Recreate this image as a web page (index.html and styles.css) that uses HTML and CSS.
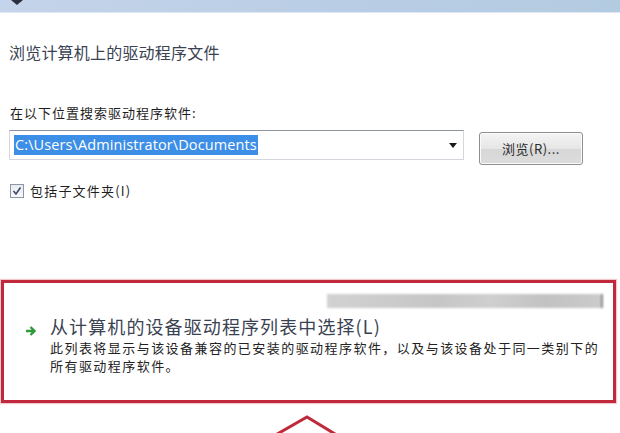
FILE: index.html
```html
<!DOCTYPE html>
<html lang="zh-CN">

<head>
    <meta charset="UTF-8">
    <meta name="viewport" content="width=device-width, initial-scale=1.0">
    <title>更新驱动程序软件</title>
    <link rel="stylesheet" href="styles.css">
</head>

<body>
    <div class="titlebar">
        <svg class="titlebar-icon" width="14" height="6" viewBox="0 0 14 6">
            <path d="M1 0 L7 5 L13 0 Z" fill="#2a3040" />
        </svg>
    </div>

    <main class="page">
        <h1 class="heading">浏览计算机上的驱动程序文件</h1>

        <div class="search">
            <label class="search-label">在以下位置搜索驱动程序软件:</label>
            <div class="search-row">
                <div class="combo">
                    <span class="combo-value">C:\Users\Administrator\Documents</span>
                    <span class="combo-arrow"></span>
                </div>
                <button class="browse">浏览(R)...</button>
            </div>
            <label class="check">
                <span class="check-box">
                    <svg width="10" height="10" viewBox="0 0 10 10">
                        <path d="M1.5 5 L4 8 L8.5 1.5" fill="none" stroke="#3b4a6b" stroke-width="1.6" />
                    </svg>
                </span>
                包括子文件夹(I)
            </label>
        </div>
    </main>

    <section class="pick">
        <div class="pick-blur"></div>
        <div class="pick-row">
            <svg class="pick-arrow" width="12" height="12" viewBox="0 0 12 12">
                <path d="M1 6 H9 M5.5 2 L9.5 6 L5.5 10" fill="none" stroke="#2f9a3a" stroke-width="2.4" />
            </svg>
            <div class="pick-text">
                <div class="pick-title">从计算机的设备驱动程序列表中选择(L)</div>
                <p class="pick-desc">此列表将显示与该设备兼容的已安装的驱动程序软件，以及与该设备处于同一类别下的所有驱动程序软件。</p>
            </div>
        </div>
    </section>

    <svg class="chevron" width="620" height="31" viewBox="0 0 620 31">
        <path d="M272 34 L307 14 L340 34" fill="none" stroke="#c0293b" stroke-width="3" />
    </svg>
</body>

</html>
```

FILE: styles.css
```css
:root {
    --red: #c0293b;
    --heading-color: #3a4252;
    --text-color: #1e1e1e;
}

* {
    margin: 0;
    padding: 0;
    box-sizing: border-box;
}

body {
    width: 620px;
    height: 433px;
    overflow: hidden;
    background: #ffffff;
    color: var(--text-color);
    font-family: "Noto Sans CJK SC", "Liberation Sans", sans-serif;
}

.titlebar {
    height: 13px;
    background: linear-gradient(to right, #c4d4ea, #b8cde4 60%, #b3cbe0);
    border-bottom: 1px solid #dfe8f2;
    padding-left: 10px;
}

.titlebar-icon {
    display: block;
}

.page {
    padding: 29px 0 0 9px;
}

.heading {
    font-size: 16px;
    font-weight: 400;
    line-height: 20px;
    letter-spacing: 0.2px;
    color: var(--heading-color);
}

.search {
    margin-top: 42px;
}

.search-label {
    display: block;
    font-size: 13px;
    line-height: 17px;
    letter-spacing: 1px;
    padding-left: 1px;
}

.search-row {
    display: flex;
    align-items: flex-start;
    gap: 15px;
    margin-top: 9px;
}

.combo {
    width: 455px;
    height: 30px;
    display: flex;
    align-items: center;
    justify-content: space-between;
    padding: 0 6px 0 4px;
    border: 1px solid #d4d8de;
    border-top-color: #8e949c;
    background: #ffffff;
}

.combo-value {
    font-family: "Open Sans", "Liberation Sans", sans-serif;
    font-size: 14.5px;
    line-height: 20px;
    padding: 0 1px;
    color: #ffffff;
    background: #3d8ee6;
    letter-spacing: 0.1px;
}

.combo-arrow {
    width: 0;
    height: 0;
    border-left: 4px solid transparent;
    border-right: 4px solid transparent;
    border-top: 5px solid #1a1a1a;
}

.browse {
    width: 104px;
    height: 33px;
    margin-top: 2px;
    border: 1px solid #8f8f8f;
    border-radius: 3px;
    background: linear-gradient(#f4f4f4, #e6e6e6 50%, #d7d7d7 51%, #dcdcdc);
    box-shadow: inset 0 0 0 1px #fbfbfb;
    font-family: "Noto Sans CJK SC", sans-serif;
    font-size: 13px;
    color: #2a2a2a;
    letter-spacing: 0.5px;
}

.check {
    display: flex;
    align-items: center;
    gap: 6px;
    margin-top: 18px;
    padding-left: 1px;
    font-size: 13px;
    line-height: 16px;
    letter-spacing: 1.2px;
}

.check-box {
    width: 14px;
    height: 14px;
    display: flex;
    align-items: center;
    justify-content: center;
    border: 1px solid #8c96a6;
    background: linear-gradient(#e8ebf0, #f8f9fb);
}

.pick {
    margin: 81px 4px 0 1px;
    height: 123px;
    border: 3px solid var(--red);
    box-shadow: 0 0 1px 1px #f3c9cf;
    padding: 11px 0 0 0;
}

.pick-blur {
    margin-left: 323px;
    width: 276px;
    height: 14px;
    background: linear-gradient(to right, #d2d2d2, #c6c6c6 40%, #cfcfcf 60%, #c2c2c2 80%, #cbcbcb);
    border-right: 2px solid #8a8a8a;
    filter: blur(0.8px);
}

.pick-row {
    display: flex;
    align-items: flex-start;
    gap: 13px;
    margin-top: 6px;
    padding-left: 21px;
}

.pick-arrow {
    margin-top: 11px;
    flex-shrink: 0;
}

.pick-title {
    font-size: 18px;
    line-height: 24px;
    letter-spacing: 1.1px;
    color: var(--heading-color);
}

.pick-desc {
    width: 560px;
    font-size: 13px;
    line-height: 18px;
    letter-spacing: 1.45px;
    color: #222222;
    margin-top: 1px;
}

.chevron {
    display: block;
}
```
